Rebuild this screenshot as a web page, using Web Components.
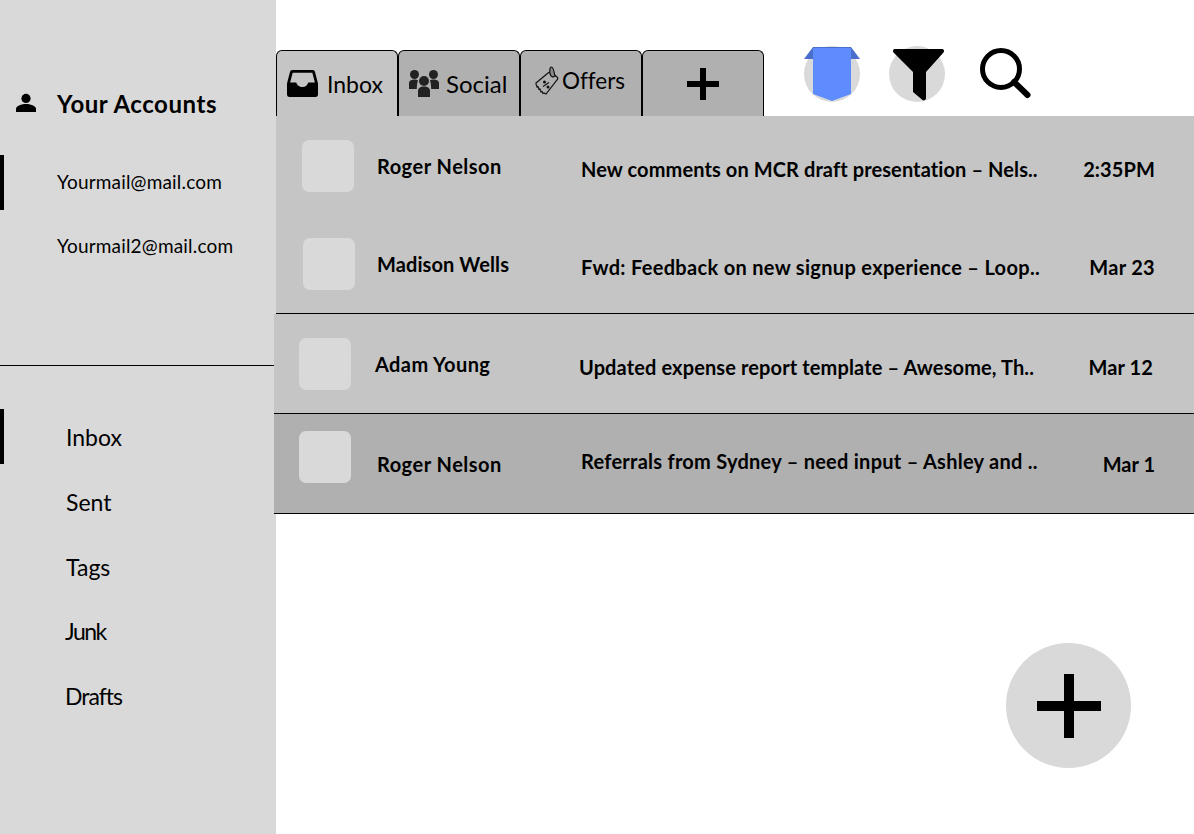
<!DOCTYPE html>
<html>
<head>
<meta charset="utf-8">
<title>Mail</title>
<style>
  html, body { margin: 0; height: 100%; background: #fff; }
  body { font-family: Lato, "Noto Sans", sans-serif; font-variant-ligatures: none; color: #000; overflow: hidden; }
</style>
</head>
<body>
<mail-app>
  <mail-sidebar slot="side">
    <account-head>Your Accounts</account-head>
    <side-link kind="account" active style="--top:37px">Yourmail@mail.com</side-link>
    <side-link kind="account" style="--top:9px">Yourmail2@mail.com</side-link>
    <side-link kind="folder" active style="--top:0">Inbox</side-link>
    <side-link kind="folder">Sent</side-link>
    <side-link kind="folder">Tags</side-link>
    <side-link kind="folder" style="--top:9px;--x:65px;--ls:-1.500px">Junk</side-link>
    <side-link kind="folder" style="--top:10px;--x:65px;--ls:-1px">Drafts</side-link>
  </mail-sidebar>
  <top-bar slot="top"></top-bar>
  <mail-row slot="list" style="--h:98px;--av-x:26px;--av-y:24px;--name-x:23px;--name-y:38px;--sub-y:41px;--end:39px;--end-y:41px;--name-ls:.5px;--sub-ls:.1px" name="Roger Nelson" subject="New comments on MCR draft presentation – Nels.." when="2:35PM"></mail-row>
  <mail-row slot="list" rule style="--h:100px;--av-x:27px;--av-y:24px;--name-x:22px;--name-y:38px;--sub-y:41px;--end:39px;--end-y:41px;--name-ls:.1px;--sub-ls:.32px;--end-ls:.3px" name="Madison Wells" subject="Fwd: Feedback on new signup experience – Loop.." when="Mar 23"></mail-row>
  <mail-row slot="list" rule wide style="--h:100px;--av-x:25px;--av-y:24px;--name-x:24px;--name-y:38px;--sub-y:41px;--end:41px;--end-y:41px;--name-ls:.4px;--sub-ls:.12px" name="Adam Young" subject="Updated expense report template – Awesome, Th.." when="Mar 12"></mail-row>
  <mail-row slot="list" rule wide selected style="--h:100px;--av-x:25px;--av-y:17px;--name-x:26px;--name-y:38px;--sub-y:35px;--end:39px;--end-y:38px;--name-ls:.5px;--sub-ls:.26px;--end-ls:0" name="Roger Nelson" subject="Referrals from Sydney – need input – Ashley and .." when="Mar 1"></mail-row>
  <compose-fab slot="fab"></compose-fab>
</mail-app>

<script>
class MailApp extends HTMLElement {
  constructor() {
    super();
    this.attachShadow({ mode: 'open' }).innerHTML = `
    <style>
      :host { display: grid; grid-template-columns: 276px 1fr; height: 834px; position: relative; }
      .main { display: flex; flex-direction: column; min-width: 0; }
      .list { display: flex; flex-direction: column; }
    </style>
    <slot name="side"></slot>
    <div class="main">
      <slot name="top"></slot>
      <div class="list"><slot name="list"></slot></div>
    </div>
    <slot name="fab"></slot>`;
  }
}

class MailSidebar extends HTMLElement {
  constructor() {
    super();
    this.attachShadow({ mode: 'open' }).innerHTML = `
    <style>
      :host { display: block; background: #d9d9d9; height: 834px; padding-top: 88px; box-sizing: border-box; }
      .accounts { height: 278px; border-bottom: 1px solid #000; box-sizing: border-box; margin-right: 2px; }
      .folders { padding-top: 43px; }
    </style>
    <div class="accounts"><slot name="accounts"></slot></div>
    <div class="folders"><slot></slot></div>`;
    // accounts go above the divider, folders below it
    this.querySelectorAll('account-head, side-link[kind=account]').forEach(el => el.slot = 'accounts');
  }
}

class AccountHead extends HTMLElement {
  constructor() {
    super();
    this.attachShadow({ mode: 'open' }).innerHTML = `
    <style>
      :host { display: flex; align-items: center; height: 30px; padding-left: 16px; font-size: 24px; font-weight: 700; letter-spacing: .55px; }
      svg { width: 20px; height: 20px; margin-right: 21px; }
    </style>
    <svg viewBox="0 0 20 20"><circle cx="10" cy="5.400" r="4.600"/><path d="M0 19v-3c0-3.400 6-5 10-5s10 1.600 10 5v3z"/></svg>
    <slot></slot>`;
  }
}

class SideLink extends HTMLElement {
  constructor() {
    super();
    const folder = this.getAttribute('kind') === 'folder';
    this.attachShadow({ mode: 'open' }).innerHTML = `
    <style>
      :host { display: flex; align-items: center; box-sizing: border-box; height: 55px; margin-top: var(--top, 10px);
        padding-left: var(--x, ${folder ? '66px' : '57px'}); padding-bottom: ${folder ? '0' : '2px'};
        font-size: ${folder ? '23px' : '19px'}; letter-spacing: var(--ls, ${folder ? '0' : '.18px'}); }
      :host([active]) { box-shadow: inset 4px 0 0 #000; }
    </style>
    <slot></slot>`;
  }
}

class TopBar extends HTMLElement {
  constructor() {
    super();
    this.attachShadow({ mode: 'open' }).innerHTML = `
    <style>
      :host { display: flex; height: 116px; box-sizing: border-box; }
      .tabs { display: flex; padding-top: 50px; }
      .tab { box-sizing: border-box; width: 122px; height: 66px; background: #b0b0b0; border: 1px solid #000;
        border-bottom: 0; border-radius: 6px 6px 0 0; display: flex; align-items: center; padding-left: 10px; }
      .tab.on { background: #c5c5c5; }
      .tab.add { justify-content: center; padding: 0; }
      .actions { display: flex; align-items: flex-start; padding-top: 46px; margin-left: 40px; }
      .circle { width: 56px; height: 56px; border-radius: 50%; background: #d9d9d9; position: relative; }
      .circle svg { position: absolute; }
      svg { display: block; flex: none; }
    </style>
    <div class="tabs">
      <div class="tab on" style="font-size:23px;gap:9px">
        <svg width="31" height="27" viewBox="0 0 30 26"><path d="M5 0h20a2 2 0 0 1 2 1.500L30 13v11a2 2 0 0 1-2 2H2a2 2 0 0 1-2-2V13L3 1.500A2 2 0 0 1 5 0z"/><path d="M5.500 2.500h19L27 12h-6.500c-.5 2.500-2.500 4.500-5.500 4.500S9.500 14.500 9 12H3z" fill="#c5c5c5"/></svg>
        Inbox
      </div>
      <div class="tab" style="font-size:24px;gap:7px">
        <svg width="30" height="27" viewBox="0 0 30 27" fill="#222"><circle cx="5.500" cy="4.500" r="4.500"/><circle cx="24.500" cy="4.500" r="4.500"/><circle cx="15" cy="11" r="5"/><path d="M0 19v-6c0-2 2-3.500 5.500-3.500 1.500 0 2.500.2 3.500.7C8.300 13 7.800 15 7.800 19zM30 19v-6c0-2-2-3.500-5.500-3.500-1.500 0-2.500.2-3.500.7C21.700 13 22.200 15 22.200 19zM9 27V21c0-2.500 2-4.500 6-4.500s6 2 6 4.500v6z"/></svg>
        Social
      </div>
      <div class="tab" style="font-size:22.500px;gap:3px;padding:0 0 6px 14px">
        <svg width="24" height="30" viewBox="0 0 24 30" fill="none" stroke="#111" stroke-width="1.200"><path d="M1 17 13 7c1-1 3-1 4 0l5 4c1 1 1 2 0 3L11 28l-2-1-1 .5-1-2-1 .5-1-3-1 .5-1-3-1 .5-1-3z"/><path d="M8 20.500l6-4"/><circle cx="9.500" cy="16" r=".9" fill="#111"/><circle cx="13" cy="21" r=".9" fill="#111"/><path d="M16 10c-2-3-1.500-9 .5-9s2.500 5 3.500 9l-2 1z" fill="#8a8a8a"/></svg>
        Offers
      </div>
      <div class="tab add">
        <svg width="32" height="32" viewBox="0 0 32 32"><path d="M13 0h6v13h13v6H19v13h-6V19H0v-6h13z"/></svg>
      </div>
    </div>
    <div class="actions">
      <div class="circle">
        <svg style="left:0;top:1px" width="56" height="54" viewBox="0 0 56 54"><path d="M0 12 9 0h38l9 12z" fill="#4a6fcb"/><path d="M9 1h38v46l-19 7-19-7z" fill="#5e8cff"/></svg>
      </div>
      <div class="circle" style="margin-left:29px">
        <svg style="left:4px;top:3px" width="52" height="53" viewBox="0 0 52 53"><path d="M2 0h47c2 0 2.500 2 1.500 3.500L33 23v26c0 2-2 3-3.500 2L20 43V23L.5 3.500C-.5 2 0 0 2 0z"/></svg>
      </div>
      <svg style="margin-left:35px;margin-top:2px" width="52" height="52" viewBox="0 0 52 52" fill="none" stroke="#000" stroke-width="5"><circle cx="21" cy="21" r="18.500"/><path d="M34 34 47.500 47" stroke-width="6" stroke-linecap="round"/></svg>
    </div>`;
  }
}

class MailRow extends HTMLElement {
  constructor() {
    super();
    this.attachShadow({ mode: 'open' }).innerHTML = `
    <style>
      :host { display: flex; align-items: flex-start; box-sizing: border-box; height: var(--h); background: #c5c5c5; font-size: 20px; font-weight: 700; white-space: nowrap; padding-left: var(--av-x); }
      :host([rule]) { border-bottom: 1px solid #000; }
      :host([wide]) { margin-left: -2px; }
      :host([selected]) { background: #b0b0b0; }
      .avatar { flex: none; width: 52px; height: 52px; border-radius: 7px; background: #d9d9d9; margin-top: var(--av-y); }
      .name { flex: none; width: 181px; margin-left: var(--name-x); margin-top: var(--name-y); line-height: 24px; letter-spacing: var(--name-ls, 0); }
      .sub { flex: 1; margin-top: var(--sub-y); line-height: 24px; margin-left: 23px; letter-spacing: var(--sub-ls, 0); }
      .when { margin-top: var(--end-y); line-height: 24px; padding-right: var(--end); letter-spacing: var(--end-ls, .1px); }
    </style>
    <div class="avatar"></div>
    <div class="name">${this.getAttribute('name')}</div>
    <div class="sub">${this.getAttribute('subject')}</div>
    <div class="when">${this.getAttribute('when')}</div>`;
  }
}

class ComposeFab extends HTMLElement {
  constructor() {
    super();
    this.attachShadow({ mode: 'open' }).innerHTML = `
    <style>
      :host { position: absolute; left: 1006px; top: 643px; width: 125px; height: 125px; border-radius: 50%;
        background: #d9d9d9; display: flex; align-items: center; justify-content: center; }
    </style>
    <svg width="64" height="64" viewBox="0 0 64 64"><path d="M27 0h10v27h27v10H37v27H27V37H0V27h27z"/></svg>`;
  }
}

customElements.define('mail-app', MailApp);
customElements.define('mail-sidebar', MailSidebar);
customElements.define('account-head', AccountHead);
customElements.define('side-link', SideLink);
customElements.define('top-bar', TopBar);
customElements.define('mail-row', MailRow);
customElements.define('compose-fab', ComposeFab);
</script>
</body>
</html>
